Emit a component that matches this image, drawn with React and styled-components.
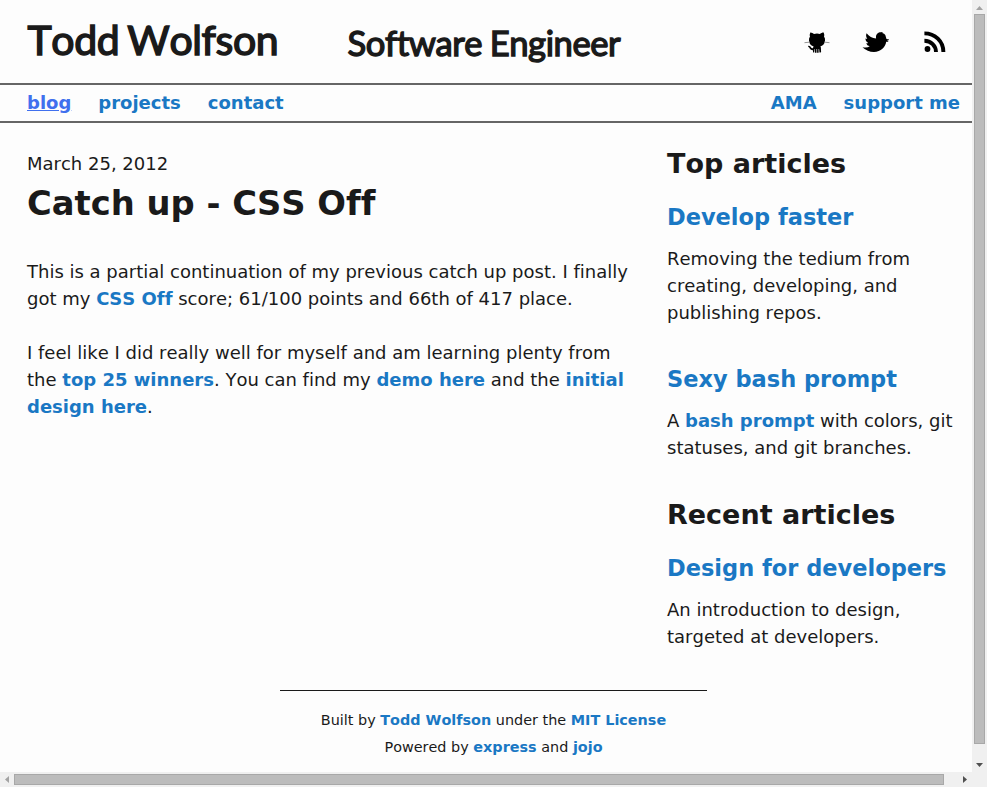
import React from "react";
import styled, { createGlobalStyle } from "styled-components";

const Global = createGlobalStyle`
  *, *::before, *::after { box-sizing: border-box; }
  html, body { margin: 0; padding: 0; background: #fdfdfd; overflow: hidden; }
  h1, h2, h3, p { margin: 0; }
`;

const Shell = styled.div`
  display: grid;
  grid-template-columns: 972px 15px;
  grid-template-rows: 772px 15px;
  width: 987px;
  height: 787px;
  background: #f0f0f0;
`;

const Viewport = styled.div`
  overflow: hidden;
  background: #fdfdfd;
  color: #1a1a1a;
  font: 18px/27px "DejaVu Sans", sans-serif;
  font-kerning: none;
  font-variant-ligatures: none;
`;

const Page = styled.div`
  width: 987px;
`;

const Header = styled.header`
  display: flex;
  align-items: flex-start;
  height: 83px;
  padding: 0 27px;
`;

const Brand = styled.h1`
  width: 320px;
  padding: 13px 0 0 0.5px;
  font: 400 41px/54px Lato, sans-serif;
  font-kerning: none;
  letter-spacing: -0.4px;
  word-spacing: -2px;
  -webkit-text-stroke: 1.5px #1a1a1a;
  white-space: nowrap;
`;

const Role = styled.h2`
  padding: 16px 0 0 0.5px;
  font: 400 34.6px/54px Lato, sans-serif;
  font-kerning: none;
  letter-spacing: -0.42px;
  word-spacing: -1px;
  -webkit-text-stroke: 1.4px #1a1a1a;
  white-space: nowrap;
`;

const Social = styled.div`
  display: flex;
  gap: 32px;
  margin: 29px 12px 0 auto;
`;

const SocialIcon = styled.svg`
  display: block;
  width: 27px;
  height: 27px;
  fill: #000;
`;

const NavBar = styled.nav`
  display: flex;
  gap: 27px;
  height: 40px;
  padding: 4px 27px 0;
  border: solid #666;
  border-width: 2px 0;
`;

const Link = styled.a`
  color: ${(p) => (p.$active ? "#4070ee" : "#1a78c4")};
  font-weight: 700;
  text-decoration: ${(p) => (p.$active ? "underline" : "none")};
`;

const RightLink = styled(Link)`
  margin-left: auto;
`;

const Columns = styled.div`
  display: grid;
  grid-template-columns: 613px 293px;
  column-gap: 27px;
  padding: 27px 27px 0;
`;

const Title = styled.h2`
  margin-bottom: 28px;
  font-size: 33.75px;
  line-height: 53px;
`;

const Paragraph = styled.p`
  margin-bottom: 27px;
`;

const SideHeading = styled.h2`
  margin-bottom: 27px;
  font-size: 27px;
  line-height: 27px;
`;

const Teaser = styled.section`
  margin-bottom: 40px;
  &:last-child { margin-bottom: 0; }
`;

const TeaserTitle = styled.h3`
  margin-bottom: 14px;
  font-size: 22.5px;
  line-height: 27px;
  white-space: nowrap;
`;

const Footer = styled.footer`
  width: 427px;
  margin: 40px auto 0;
  padding-top: 16px;
  border-top: 1px solid #1a1a1a;
  font-size: 14.4px;
  text-align: center;
`;

const Track = styled.div`
  display: flex;
  flex-direction: ${(p) => (p.$vertical ? "column" : "row")};
  align-items: center;
  background: #f0f0f0;
`;

const Arrow = styled.svg`
  flex: none;
  display: block;
  width: ${(p) => (p.$vertical ? 15 : 14)}px;
  height: ${(p) => (p.$vertical ? 14 : 15)}px;
  fill: ${(p) => (p.$dim ? "#a3a3a3" : "#505050")};
`;

const Thumb = styled.div`
  flex: none;
  width: ${(p) => (p.$vertical ? "11px" : "930px")};
  height: ${(p) => (p.$vertical ? "730px" : "11px")};
  background: #bcbcbc;
  border: 1px solid #a8a8a8;
`;

const Spacer = styled.div`
  flex: 1;
`;

export default function App() {
  return (
    <>
      <Global />
      <Shell>
        <Viewport>
          <Page>
            <Header>
              <Brand>Todd Wolfson</Brand>
              <Role>Software Engineer</Role>
              <Social>
                <SocialIcon viewBox="0 0 27 27" aria-label="GitHub">
                  <path d="M7.3 3.5 C8.4 3.3 10 4.2 11 4.9 Q14 4 17 4.9 C18.2 4 19.7 3.3 20.7 3.5 Q21.6 5.7 21 7.6 Q22.4 9.3 22 12 C21.4 15.3 19.6 16.8 17.4 17.2 Q17.9 18 17.9 19 L18.1 23 Q17.4 23.8 16.5 23.5 L16.1 20 H15.6 V23.7 H14.1 V20 H13.5 V23.7 H12 V20 H11.6 L11.2 23.5 Q10.2 23.8 10 23 V21.2 Q7.7 21.4 6.9 19.8 Q6.4 18.4 5.1 17.7 L5.3 16.7 Q7.5 16.5 8.1 18.4 Q8.9 19.6 10.1 19 Q10.1 17.8 10.6 17.2 C8.3 16.8 6.6 15.3 6 12 Q5.7 9.2 7 7.6 Q6.4 5.5 7.3 3.5Z" />
                  <path d="M1.5 13.7 L7 13.1 M21 13.1 L26.5 13.7" fill="none" stroke="#888" strokeWidth=".9" />
                </SocialIcon>
                <SocialIcon viewBox="0 0 27 27" aria-label="Twitter">
                  <path d="M0 18.2 Q4.7 19.2 7.2 17.3 Q4.3 16.6 3.7 14.2 Q4.8 14.5 5.6 14 Q2.7 12.7 2.9 9.4 Q3.8 9.9 4.8 9.8 Q2.8 7.4 4.1 4.2 C6.3 7.1 10 9.4 13.6 9.4 C12.8 5.5 15.6 3.1 18.3 3.2 L20.2 3.1 L19.8 4 Q21.9 4.3 22.8 6 L24 9.9 L27.2 10.8 L24.6 11.8 L26.2 13 L23.7 12.8 C23 18 18.5 23 11.4 23 Q5 23 0 18.2Z" transform="translate(.5 0)" />
                </SocialIcon>
                <SocialIcon viewBox="0 0 27 27" aria-label="RSS">
                  <circle cx="6.5" cy="20" r="2.9" />
                  <path d="M3.4 11.7 C10 11.7 15 16.8 15 23 M3.4 4.4 C14 4.4 22.4 12.4 22.4 23" fill="none" stroke="#000" strokeWidth="3.9" />
                </SocialIcon>
              </Social>
            </Header>
            <NavBar>
              <Link $active>blog</Link>
              <Link>projects</Link>
              <Link>contact</Link>
              <RightLink>AMA</RightLink>
              <Link>support me</Link>
            </NavBar>
            <Columns>
              <main>
                <p>March 25, 2012</p>
                <Title>Catch up - CSS Off</Title>
                <Paragraph>
                  This is a partial continuation of my previous catch up post. I finally got my{" "}
                  <Link>CSS Off</Link> score; 61/100 points and 66th of 417 place.
                </Paragraph>
                <Paragraph>
                  I feel like I did really well for myself and am learning plenty from the{" "}
                  <Link>top 25 winners</Link>. You can find my <Link>demo here</Link> and the{" "}
                  <Link>initial design here</Link>.
                </Paragraph>
              </main>
              <aside>
                <SideHeading>Top articles</SideHeading>
                <Teaser>
                  <TeaserTitle><Link>Develop faster</Link></TeaserTitle>
                  <p>Removing the tedium from creating, developing, and publishing repos.</p>
                </Teaser>
                <Teaser>
                  <TeaserTitle><Link>Sexy bash prompt</Link></TeaserTitle>
                  <p>A <Link>bash prompt</Link> with colors, git statuses, and git branches.</p>
                </Teaser>
                <SideHeading>Recent articles</SideHeading>
                <Teaser>
                  <TeaserTitle><Link>Design for developers</Link></TeaserTitle>
                  <p>An introduction to design, targeted at developers.</p>
                </Teaser>
              </aside>
            </Columns>
            <Footer>
              <p>Built by <Link>Todd Wolfson</Link> under the <Link>MIT License</Link></p>
              <p>Powered by <Link>express</Link> and <Link>jojo</Link></p>
            </Footer>
          </Page>
        </Viewport>
        <Track $vertical>
          <Arrow $vertical $dim viewBox="0 0 15 14"><path d="M4 10 L7.5 6 L11 10Z" /></Arrow>
          <Thumb $vertical />
          <Spacer />
          <Arrow $vertical viewBox="0 0 15 14"><path d="M4 5 L11 5 L7.5 9Z" /></Arrow>
        </Track>
        <Track>
          <Arrow $dim viewBox="0 0 14 15"><path d="M9 4 L9 11 L5 7.5Z" /></Arrow>
          <Thumb />
          <Spacer />
          <Arrow viewBox="0 0 14 15"><path d="M5 4 L9 7.5 L5 11Z" /></Arrow>
        </Track>
      </Shell>
    </>
  );
}
